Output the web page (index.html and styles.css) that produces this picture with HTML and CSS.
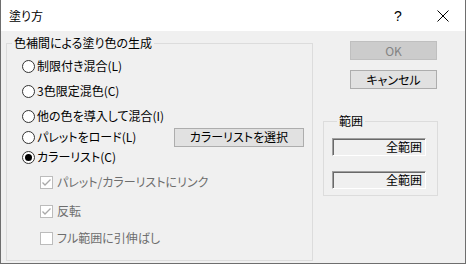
FILE: index.html
```html
<!DOCTYPE html>
<html lang="ja">
<head>
  <meta charset="UTF-8">
  <title>塗り方</title>
  <link rel="stylesheet" href="styles.css">
</head>
<body>
  <div class="dialog">
    <!-- タイトルバー -->
    <div class="titlebar">
      <span class="title">塗り方</span>
      <span class="help">?</span>
      <span class="close">
        <svg width="12" height="12" viewBox="0 0 12 12"><path d="M0.5 0.5 L11.5 11.5 M11.5 0.5 L0.5 11.5" stroke="#000" stroke-width="1" fill="none"/></svg>
      </span>
    </div>

    <div class="content">
      <!-- 色補間 -->
      <div class="group main-group">
        <span class="legend">色補間による塗り色の生成</span>
        <div class="options">
          <label class="radio"><span class="circle"></span>制限付き混合(L)</label>
          <label class="radio"><span class="circle"></span>3色限定混色(C)</label>
          <label class="radio"><span class="circle"></span>他の色を導入して混合(I)</label>
          <div class="option-row">
            <label class="radio"><span class="circle"></span>パレットをロード(L)</label>
            <button class="btn select-btn">カラーリストを選択</button>
          </div>
          <label class="radio checked"><span class="circle"></span>カラーリスト(C)</label>
          <label class="check disabled">
            <span class="box"><svg width="11" height="11" viewBox="0 0 11 11"><path d="M1.5 5.5 L4 8 L9.5 2.5" stroke="#a9a9a9" stroke-width="1.3" fill="none"/></svg></span>パレット/カラーリストにリンク
          </label>
          <label class="check disabled">
            <span class="box"><svg width="11" height="11" viewBox="0 0 11 11"><path d="M1.5 5.5 L4 8 L9.5 2.5" stroke="#a9a9a9" stroke-width="1.3" fill="none"/></svg></span>反転
          </label>
          <label class="check disabled"><span class="box"></span>フル範囲に引伸ばし</label>
        </div>
      </div>

      <!-- ボタンと範囲 -->
      <div class="side">
        <button class="btn disabled">OK</button>
        <button class="btn cancel-btn">キャンセル</button>
        <div class="group range-group">
          <span class="legend">範囲</span>
          <div class="field first">全範囲</div>
          <div class="field">全範囲</div>
        </div>
      </div>
    </div>
  </div>
</body>
</html>
```

FILE: styles.css
```css
:root {
  --dialog-bg: #f0f0f0;
  --group-border: #dcdcdc;
  --text-color: #000;
  --gray-text: #6d6d6d;
}
* {
  box-sizing: border-box;
}
body {
  margin: 0;
  font-family: "Noto Sans CJK JP", sans-serif;
  font-size: 12px;
  font-feature-settings: "palt";
  color: var(--text-color);
  background: #fff;
}
.dialog {
  width: 466px;
  height: 264px;
  border: 1px solid #6e6e6e;
  border-top: none;
  background: var(--dialog-bg);
  display: flex;
  flex-direction: column;
}
.titlebar {
  height: 31px;
  background: #fff;
  display: flex;
  align-items: center;
  padding-left: 8px;
}
.title {
  font-size: 12px;
  line-height: 14px;
}
.help {
  margin-left: auto;
  font-family: "Liberation Sans", sans-serif;
  font-size: 14px;
  width: 12px;
  text-align: center;
}
.close {
  display: flex;
  margin: 0 16px 0 33px;
}

.content {
  display: flex;
  padding: 10px 0 0 5px;
}
.group {
  border: 1px solid var(--group-border);
}
.legend {
  display: block;
  width: fit-content;
  margin: -8px 0 0 5px;
  padding: 0 2px;
  line-height: 14px;
  background: var(--dialog-bg);
}
.main-group {
  width: 307px;
  height: 218px;
  margin-top: 2px;
}
.options {
  display: grid;
  grid-template-rows: 25px 25px 21px 20px 25px 29px 27px 16px;
  align-items: start;
  padding: 8px 0 0 15px;
}
.radio, .check, .option-row {
  height: 16px;
  display: flex;
  align-items: center;
  line-height: 14px;
  white-space: nowrap;
}
.circle {
  width: 13px;
  height: 13px;
  border: 1px solid #333;
  border-radius: 50%;
  background: #fff;
  margin-right: 2px;
  display: flex;
  align-items: center;
  justify-content: center;
}
.radio.checked .circle::after {
  content: "";
  width: 7px;
  height: 7px;
  border-radius: 50%;
  background: #000;
}
.check {
  padding-left: 18px;
}
.check.disabled {
  color: var(--gray-text);
}
.box {
  width: 13px;
  height: 13px;
  border: 1px solid #bcbcbc;
  background: #fff;
  margin-right: 4px;
  display: flex;
  align-items: center;
  justify-content: center;
}
.btn {
  font: inherit;
  font-feature-settings: "palt";
  height: 19px;
  padding: 0;
  line-height: 14px;
  border: 1px solid #adadad;
  background: #e1e1e1;
  color: var(--text-color);
}
.btn.disabled {
  background: #cccccc;
  border-color: #bfbfbf;
  color: #838383;
}
.select-btn {
  width: 130px;
  margin: 0 8px 0 auto;
}

.side {
  margin-left: 10px;
  width: 115px;
  display: flex;
  flex-direction: column;
}
.side > .btn {
  width: 87px;
  margin-left: 27px;
}
.cancel-btn {
  margin-top: 10px;
}
.range-group {
  margin-top: 32px;
  padding: 0 0 6px 8px;
}
.field {
  width: 94px;
  height: 18px;
  margin-top: 15px;
  border: 1px solid;
  border-color: #a0a0a0 #fff #fff #a0a0a0;
  box-shadow: inset 1px 1px #696969;
  text-align: right;
  padding-right: 3px;
  line-height: 16px;
}
.field.first {
  margin-top: 10px;
}
```
